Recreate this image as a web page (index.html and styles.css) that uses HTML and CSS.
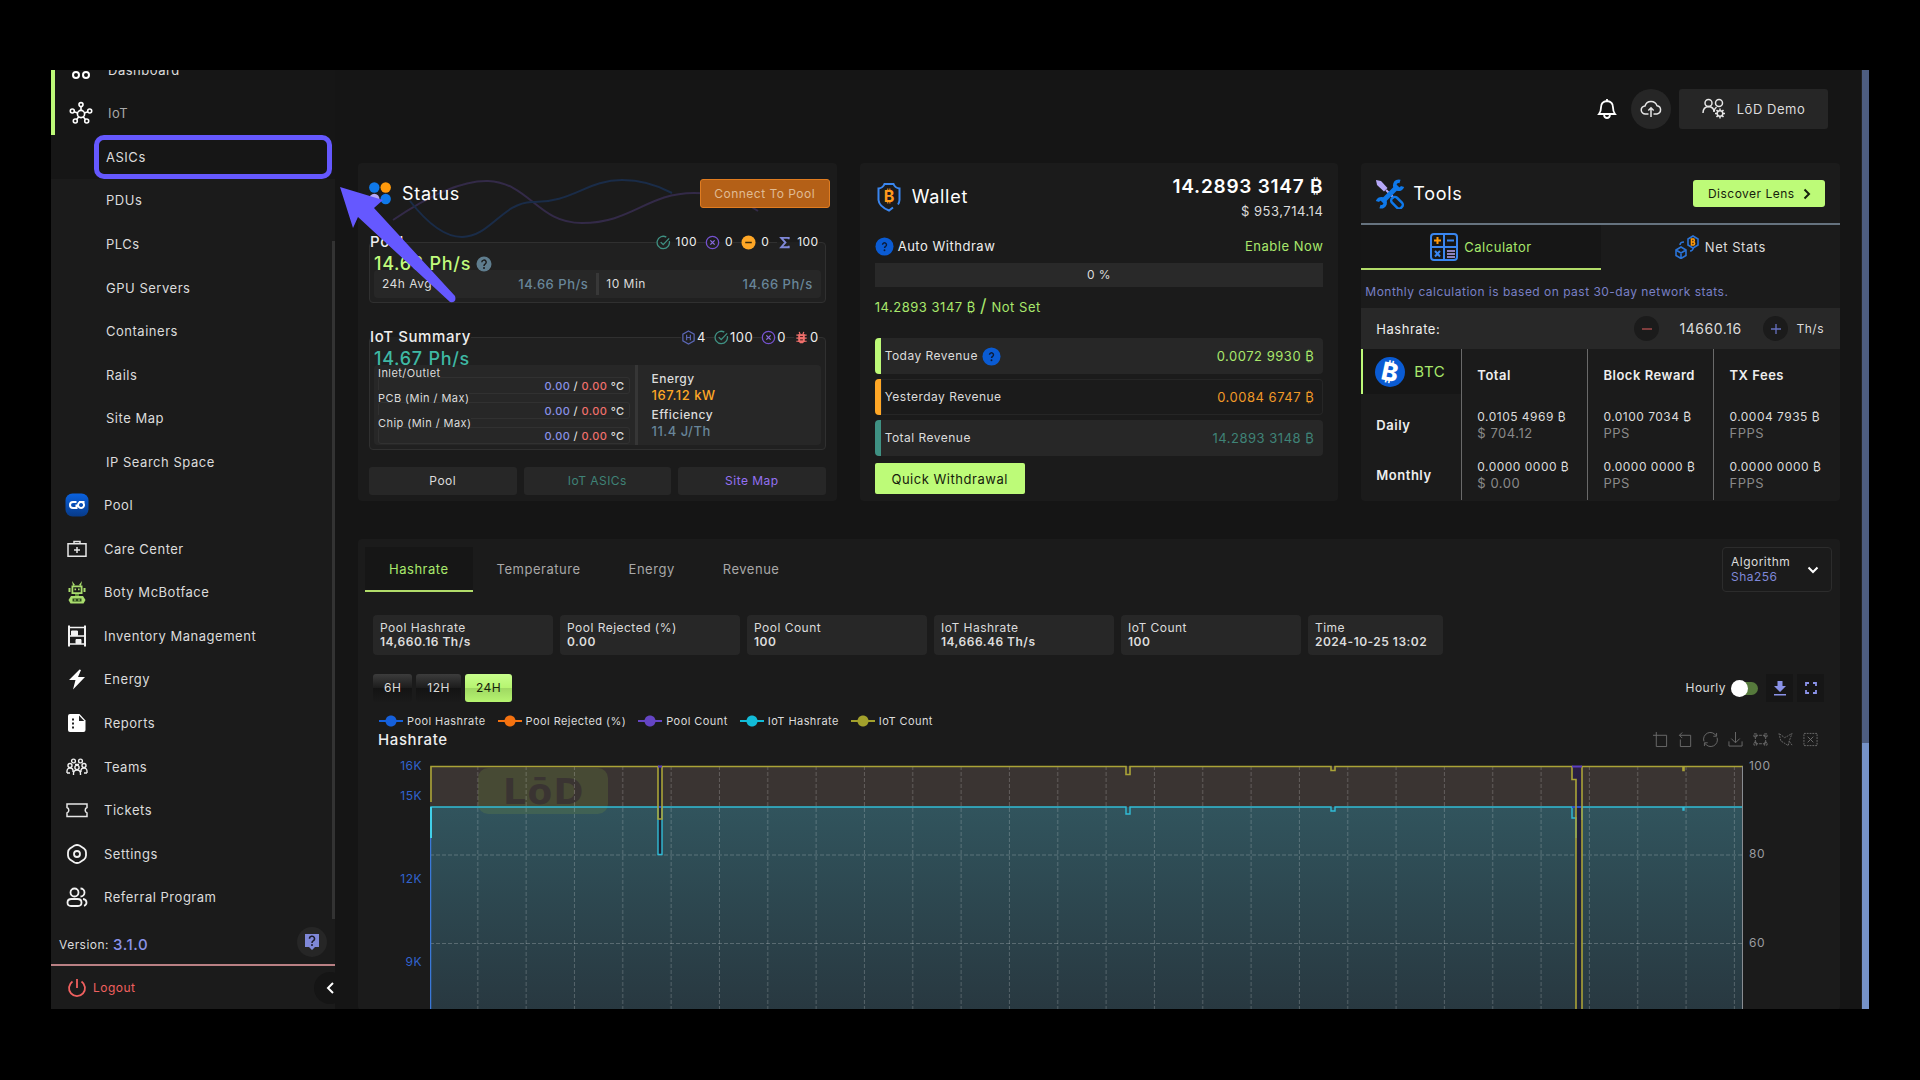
FILE: index.html
```html
<!DOCTYPE html>
<html lang="en">
<head>
    <meta charset="UTF-8">
    <meta name="viewport" content="width=device-width, initial-scale=1.0">
    <title>LōD Dashboard</title>
    <link rel="stylesheet" href="styles.css">
</head>
<body>

    <!-- shared icons -->
    <svg class="sprite" aria-hidden="true">
        <symbol id="i-check" viewBox="0 0 16 16">
            <path d="M14.2 6.5A6.6 6.6 0 1 1 11 2.2M5 7.6l2.7 2.7L14 3.6" fill="none" stroke="#3f9183" stroke-width="1.4"/>
        </symbol>
        <symbol id="i-cross" viewBox="0 0 16 16">
            <circle cx="8" cy="8" r="6.6" fill="none" stroke="#7552cf" stroke-width="1.4"/>
            <path d="M5.7 5.7l4.6 4.6M10.3 5.7l-4.6 4.6" stroke="#8a6be0" stroke-width="1.4"/>
        </symbol>
        <symbol id="i-help" viewBox="0 0 20 20">
            <circle cx="10" cy="10" r="9.5" fill="#0a5bd3"/>
            <path d="M7.9 8.2a2.1 2.1 0 1 1 3.2 1.8q-1.1.6-1.1 1.7" fill="none" stroke="#0b1c3c" stroke-width="1.5"/>
            <circle cx="10" cy="14" r="1" fill="#0b1c3c"/>
        </symbol>
    </svg>

    <div class="app">

        <aside class="sidebar">
            <nav class="nav">
                <ul class="nav-list">
                    <li class="main-item active">
                        <a href="#">
                            <svg width="24" height="24" viewBox="0 0 24 24" fill="none" stroke="#fff" stroke-width="2"><circle cx="7" cy="7" r="3"/><circle cx="17" cy="7" r="3"/><circle cx="7" cy="17" r="3"/><circle cx="17" cy="17" r="3"/></svg>
                            Dashboard
                        </a>
                    </li>
                    <li class="main-item active">
                        <a href="#">
                            <svg width="24" height="24" viewBox="0 0 24 24" fill="none" stroke="#fff" stroke-width="1.6"><circle cx="12" cy="13" r="3.6"/><circle cx="12" cy="3.6" r="2"/><circle cx="3.3" cy="10" r="2"/><circle cx="20.7" cy="10" r="2"/><circle cx="6.3" cy="20" r="2"/><circle cx="17.7" cy="20" r="2"/><path d="M12 5.6v3.8M5.2 10.8l3.4 1.1M18.8 10.8l-3.4 1.1M7.6 18.4l2.2-2.6M16.4 18.4l-2.2-2.6"/></svg>
                            <span class="dim">IoT</span>
                        </a>
                    </li>
                    <li class="sub-item current">
                        <a href="#">ASICs</a>
                        <svg class="pointer" width="120" height="120" viewBox="0 0 120 120" fill="#6558ff"><path d="M0 2L43 15L34 23L115 111Q117 118 110 117L18 32L13 43Z"/></svg>
                    </li>
                    <li class="sub-item"><a href="#">PDUs</a></li>
                    <li class="sub-item"><a href="#">PLCs</a></li>
                    <li class="sub-item"><a href="#">GPU Servers</a></li>
                    <li class="sub-item"><a href="#">Containers</a></li>
                    <li class="sub-item"><a href="#">Rails</a></li>
                    <li class="sub-item"><a href="#">Site Map</a></li>
                    <li class="sub-item"><a href="#">IP Search Space</a></li>
                    <li class="main-item">
                        <a href="#">
                            <svg width="24" height="24" viewBox="0 0 24 24"><defs><linearGradient id="poolbg" x2="0" y2="1"><stop stop-color="#0a62e0"/><stop offset="1" stop-color="#073a88"/></linearGradient></defs><rect x=".5" y=".5" width="23" height="23" rx="7" fill="url(#poolbg)"/><path d="M11.500 9H8a3 3 0 0 0 0 6h3.500V11.500M14 9h5.500M16 9a3 3 0 1 0 .1 0" fill="none" stroke="#fff" stroke-width="2"/></svg>
                            Pool
                        </a>
                    </li>
                    <li class="main-item">
                        <a href="#">
                            <svg width="24" height="24" viewBox="0 0 24 24" fill="none" stroke="#e6e6e6" stroke-width="1.5"><path d="M3 6.800h18v12.400H3zM9 6.500V4.500h6v2M12 10v6M9 13h6"/></svg>
                            Care Center
                        </a>
                    </li>
                    <li class="main-item">
                        <a href="#">
                            <svg width="24" height="24" viewBox="0 0 24 24" fill="#a9dd6d"><path d="M7 1l3 4-2 1zM17 1l-3 4 2 1z"/><path d="M6.500 5.500h11v8.500h-11zM8.300 7.200v5h7.400v-5z" fill-rule="evenodd"/><path d="M3.500 8h2v4h-2zM18.500 8h2v4h-2zM9.500 8.500h1.600v1.800H9.500zM13 8.500h1.600v1.800H13z"/><path d="M10 14h4v2h-4z" fill="#5d8a36"/><path d="M6 16h12l2.500 4-2 3.500h-13l-2-3.500z"/><path d="M7.500 18.500h9v3h-9z" fill="#2c4a1c"/><path d="M9 19.500h2v1H9zM13 19.500h2v1h-2z"/></svg>
                            Boty McBotface
                        </a>
                    </li>
                    <li class="main-item">
                        <a href="#">
                            <svg width="24" height="24" viewBox="0 0 24 24" fill="none" stroke="#f2f2f2"><path d="M4 1.500v21M20 1.500v21" stroke-width="2"/><path d="M4 3.500h16M4 12h16M4 20h16" stroke-width="1.500"/><path d="M6.500 7h6v4.500h-6zM11 15.500h5v4h-5z" fill="#f2f2f2"/></svg>
                            Inventory Management
                        </a>
                    </li>
                    <li class="main-item">
                        <a href="#">
                            <svg width="24" height="24" viewBox="0 0 24 24" fill="#fff"><path d="M14.500 2.500L4 13h6.500l-2.500 9.500L20 10h-7l3-7z"/></svg>
                            Energy
                        </a>
                    </li>
                    <li class="main-item">
                        <a href="#">
                            <svg width="24" height="24" viewBox="0 0 24 24"><path d="M5 3h9.500l6 6.500V19a2 2 0 0 1-2 2H5a2 2 0 0 1-2-2V5a2 2 0 0 1 2-2z" fill="#fff"/><path d="M14 4.500V10h5.300zM7 7.500h2v2H7zM7 11.500h2v2H7zM7 15.500h2v2H7z" fill="#222"/></svg>
                            Reports
                        </a>
                    </li>
                    <li class="main-item">
                        <a href="#">
                            <svg width="24" height="24" viewBox="0 0 24 24" fill="none" stroke="#f0f0f0" stroke-width="1.400"><circle cx="8.500" cy="6" r="1.900"/><circle cx="15.500" cy="6" r="1.900"/><circle cx="5" cy="10.500" r="2"/><circle cx="19" cy="10.500" r="2"/><circle cx="12" cy="12.500" r="2.100"/><path d="M2 18q-.5-5 3-5t3 4M22 18q.5-5-3-5t-3 4M8.500 20q-.5-5 3.500-5t3.500 5M2 18h3M19 18h3M10 9.500h4"/></svg>
                            Teams
                        </a>
                    </li>
                    <li class="main-item">
                        <a href="#">
                            <svg width="24" height="24" viewBox="0 0 24 24" fill="none" stroke="#e6e6e6" stroke-width="1.500"><path d="M2 6h20v3.500a3 3 0 0 0 0 5.500v3.500H2V15a3 3 0 0 0 0-5.500z"/></svg>
                            Tickets
                        </a>
                    </li>
                    <li class="main-item">
                        <a href="#">
                            <svg width="24" height="24" viewBox="0 0 24 24" fill="none" stroke="#f2f2f2" stroke-width="1.800"><path d="M9.500 3.500q2.500-1 5 0l4.500 3q2 1.500 2 4v3q0 2.500-2 4l-4.500 3q-2.500 1-5 0l-4.500-3q-2-1.500-2-4v-3q0-2.500 2-4z"/><circle cx="12" cy="12" r="3"/></svg>
                            Settings
                        </a>
                    </li>
                    <li class="main-item">
                        <a href="#">
                            <svg width="24" height="24" viewBox="0 0 24 24" fill="none" stroke="#f2f2f2" stroke-width="1.800"><circle cx="9.500" cy="7.500" r="4"/><path d="M2.500 17.500q0-3.500 4-3.500h6q4 0 4 3.500t-3.500 3.500H6q-3.500 0-3.500-3.500zM15.500 3.500a4 4 0 0 1 0 8M18 14q3.500.5 3.500 3.500 0 2.500-2.500 3.300"/></svg>
                            Referral Program
                        </a>
                    </li>
                </ul>
                <div class="nav-thumb"></div>
            </nav>
            <div class="version">
                <span>Version:</span>
                <strong>3.1.0</strong>
                <button class="help-btn" aria-label="Help">
                    <svg width="16" height="18" viewBox="0 0 16 18"><path d="M1 1h14v13h-4l-3 3-3-3H1z" fill="#7f88d8"/><path d="M5.500 5.800a2.500 2.500 0 1 1 3.700 2.100q-1.200.7-1.200 2" fill="none" stroke="#1b1b2c" stroke-width="1.500"/><circle cx="8" cy="12" r="1" fill="#1b1b2c"/></svg>
                </button>
            </div>
            <div class="logout">
                <a href="#">
                    <svg width="20" height="20" viewBox="0 0 20 20" fill="none" stroke="#f0605f" stroke-width="1.800"><path d="M5.500 3.500a8 8 0 1 0 9 0M10 1v9"/></svg>
                    Logout
                </a>
                <button class="collapse" aria-label="Collapse menu">
                    <svg width="10" height="12" viewBox="0 0 10 12" fill="none" stroke="#fff" stroke-width="2"><path d="M8 1L3 6l5 5"/></svg>
                </button>
            </div>
        </aside>

        <main class="main">
            <header class="topbar">
                <button class="bell" aria-label="Notifications">
                    <svg width="20" height="22" viewBox="0 0 20 22" fill="none" stroke="#fff" stroke-width="1.800"><path d="M2 16q2-2.500 2-6.500 0-6 6-6.500 6 .5 6 6.500 0 4 2 6.500zM10 3V1M7 17q.5 3 3 3t3-3"/></svg>
                </button>
                <button class="cloud" aria-label="Upload">
                    <svg width="22" height="18" viewBox="0 0 22 18" fill="none" stroke="#e6e6e6" stroke-width="1.500"><path d="M8.500 14H5.500a4 4 0 0 1-.5-8 6.300 6.300 0 0 1 12-.3 4.200 4.200 0 0 1 0 8.300h-3.500M11 17V8M8.300 10.500L11 7.800l2.700 2.700"/></svg>
                </button>
                <button class="account">
                    <svg width="24" height="22" viewBox="0 0 24 22" fill="none" stroke="#e6e6e6" stroke-width="1.500"><circle cx="6.500" cy="5" r="3.500"/><circle cx="17" cy="5" r="3.500"/><path d="M1 15q0-6 5.500-6.500Q12 9 12 14q0-3 2.500-5"/><circle cx="18" cy="15.500" r="2.800"/><path d="M18 10.500v2M18 18.500v2M13 15.500h2M21 15.500h2M14.500 12l1.400 1.400M20.100 17.600l1.400 1.400M21.500 12l-1.400 1.400M15.900 17.600L14.500 19"/></svg>
                    LōD Demo
                </button>
            </header>

            <section class="cards">

                <article class="card status">
                    <svg class="waves" width="370" height="64" viewBox="0 0 370 64" fill="none" stroke-width="2"><path d="M1 43Q60 3 96 4C138 6 145 46 190 46C240 46 255 16 302 16Q340 16 366 34" stroke="#332a48"/><path d="M18 24Q46 60 70 60C98 60 110 26 140 25C180 26 195 3 230 3Q256 3 280 16" stroke="#1a2c48"/></svg>
                    <div class="card-head">
                        <svg width="22" height="23" viewBox="0 0 22 23"><circle cx="5.300" cy="5.500" r="5.200" fill="#0f79ea"/><circle cx="16.700" cy="5.500" r="5.200" fill="#ff9a0c"/><circle cx="5.300" cy="17" r="5.200" fill="#b6a8f8"/><circle cx="16.700" cy="17" r="5.200" fill="#0f79ea"/></svg>
                        <h2>Status</h2>
                        <button class="connect">Connect To Pool</button>
                    </div>

                    <div class="group">
                        <div class="group-head">
                            <h3>Pool</h3>
                            <ul class="counts wide">
                                <li><svg><use href="#i-check"/></svg>100</li>
                                <li><svg><use href="#i-cross"/></svg>0</li>
                                <li><svg viewBox="0 0 16 16"><circle cx="8" cy="8" r="7.500" fill="#ffa726"/><path d="M4.500 8h7" stroke="#3a2a0a" stroke-width="1.600"/></svg>0</li>
                                <li><svg viewBox="0 0 16 16" fill="none" stroke="#7f88d8" stroke-width="2"><path d="M12.500 4.500V3h-8l4.500 5-4.500 5h8v-1.500"/></svg>100</li>
                            </ul>
                        </div>
                        <div class="rate lime">14.66 Ph/s
                            <svg width="16" height="16" viewBox="0 0 16 16"><circle cx="8" cy="8" r="7.500" fill="#5f7d8e"/><path d="M5.800 6.300a2.200 2.200 0 1 1 3.300 1.900Q8 8.900 8 10" fill="none" stroke="#1b1b1b" stroke-width="1.500"/><circle cx="8" cy="12" r="1" fill="#1b1b1b"/></svg>
                        </div>
                        <div class="panel averages">
                            <div><span>24h Avg</span><b>14.66 Ph/s</b></div>
                            <div><span>10 Min</span><b>14.66 Ph/s</b></div>
                        </div>
                    </div>

                    <div class="group">
                        <div class="group-head">
                            <h3>IoT Summary</h3>
                            <ul class="counts">
                                <li><svg viewBox="0 0 16 16" fill="none" stroke="#5a66b4" stroke-width="1.300"><path d="M8 1l6 3.400v7.200L8 15l-6-3.400V4.400z"/><path d="M6 5v6M10 5v6M6 8h4"/></svg>4</li>
                                <li><svg><use href="#i-check"/></svg>100</li>
                                <li><svg><use href="#i-cross"/></svg>0</li>
                                <li><svg viewBox="0 0 16 16" fill="#f0706c"><path d="M4.500 4.500h7v7.500l-2 2h-3l-2-2z"/><path d="M5.500 2l1 2.500M10.500 2l-1 2.500M2.500 5.500h11M2.500 8.700h11M2.500 12h11" stroke="#f0706c" stroke-width="1.300"/><path d="M6.500 7h3M6.500 10.500h3" stroke="#3a1515"/></svg>0</li>
                            </ul>
                        </div>
                        <div class="rate teal">14.67 Ph/s</div>
                        <div class="panel summary">
                            <dl class="temps">
                                <div><dt>Inlet/Outlet</dt><dd><i class="cold">0.00</i> / <i class="hot">0.00</i> °C</dd></div>
                                <div><dt>PCB (Min / Max)</dt><dd><i class="cold">0.00</i> / <i class="hot">0.00</i> °C</dd></div>
                                <div><dt>Chip (Min / Max)</dt><dd><i class="cold">0.00</i> / <i class="hot">0.00</i> °C</dd></div>
                            </dl>
                            <dl class="power">
                                <dt>Energy</dt><dd class="orange">167.12 kW</dd>
                                <dt>Efficiency</dt><dd class="slate">11.4 J/Th</dd>
                            </dl>
                        </div>
                    </div>

                    <div class="links">
                        <button>Pool</button>
                        <button class="green">IoT ASICs</button>
                        <button class="violet">Site Map</button>
                    </div>
                </article>

                <article class="card wallet">
                    <div class="wallet-head">
                        <svg width="28" height="30" viewBox="0 0 28 30"><path d="M18 25.500L14 28.500Q4 24.500 3.500 18V6.500Q8 6 9.500 2h9q1.500 4 6 4.500V18q-.3 3-1.500 4.500" fill="none" stroke="#3a86f0" stroke-width="2"/><text x="14" y="20" text-anchor="middle" class="coin">₿</text></svg>
                        <h2>Wallet</h2>
                        <div class="balance">
                            <strong>14.2893 3147 ₿</strong>
                            <span>$ 953,714.14</span>
                        </div>
                    </div>
                    <div class="auto">
                        <svg class="help"><use href="#i-help"/></svg>
                        <span>Auto Withdraw</span>
                        <a href="#">Enable Now</a>
                    </div>
                    <div class="bar">0 %</div>
                    <div class="target">14.2893 3147 ₿ <big>/</big> Not Set</div>
                    <ul class="revenue">
                        <li class="today">Today Revenue <svg class="help"><use href="#i-help"/></svg><b>0.0072 9930 ₿</b></li>
                        <li class="yesterday">Yesterday Revenue <b>0.0084 6747 ₿</b></li>
                        <li class="total">Total Revenue <b>14.2893 3148 ₿</b></li>
                    </ul>
                    <button class="withdraw">Quick Withdrawal</button>
                </article>

                <article class="card tools">
                    <div class="tools-head">
                        <svg width="30" height="30" viewBox="0 0 30 30"><path d="M1 1l5 1 6.500 7-3.500 3.500L2 6z" fill="#b6a8f8"/><path d="M11 11l7 7" stroke="#b6a8f8" stroke-width="2"/><rect x="16" y="20" width="13" height="7" rx="3" transform="rotate(45 22 23)" fill="none" stroke="#0f79ea" stroke-width="2.500"/><path d="M7 23L23 7" stroke="#0f79ea" stroke-width="5"/><path d="M25 2.500a4 4 0 1 0 2.500 5M5 27.500a4 4 0 1 0-2.500-5" fill="none" stroke="#0f79ea" stroke-width="3.500"/></svg>
                        <h2>Tools</h2>
                        <button class="discover">Discover Lens
                            <svg width="8" height="12" viewBox="0 0 8 12" fill="none" stroke="#16210c" stroke-width="2"><path d="M1.500 1.500L6 6l-4.500 4.500"/></svg>
                        </button>
                    </div>
                    <div class="tools-tabs">
                        <button class="selected">
                            <svg width="28" height="28" viewBox="0 0 28 28" fill="none" stroke-width="2"><rect x="1" y="1" width="26" height="26" rx="3" stroke="#3a86f0"/><path d="M14 1v26M1 14h26M17 7.500h7" stroke="#3a86f0"/><path d="M4 7.500h7M7.500 4v7" stroke="#ff9a0c"/><path d="M5 18l5 5.500M10 18l-5 5.500" stroke="#3a86f0"/><path d="M17 18h8M17 21h8M17 24h8" stroke="#b6a8f8" stroke-width="1.300"/></svg>
                            Calculator
                        </button>
                        <button>
                            <svg width="24" height="24" viewBox="0 0 24 24" fill="none" stroke="#2b74d8" stroke-width="1.600"><path d="M1 15l5-3 5 3v5.500l-5 3-5-3zM1 15l5 3 5-3M6 18v5M5 10q0-3 4-3M15 16q3 0 3.500-4"/><path d="M18 1l5 3v6l-5 3-5-3V4z"/><path d="M16.500 4h2.300q1 1.400 0 3 1.500 1.500 0 3h-2.300zM16.500 7h2" stroke="#ff9a0c"/></svg>
                            Net Stats
                        </button>
                    </div>
                    <p class="note">Monthly calculation is based on past 30-day network stats.</p>
                    <div class="hashrate">
                        <label for="rate">Hashrate:</label>
                        <button class="minus" aria-label="Decrease"><svg width="12" height="12" viewBox="0 0 12 12" stroke="#a04a4a" stroke-width="1.500"><path d="M1 6h10"/></svg></button>
                        <input id="rate" type="text" value="14660.16">
                        <button class="plus" aria-label="Increase"><svg width="12" height="12" viewBox="0 0 12 12" stroke="#6670c0" stroke-width="1.300"><path d="M1 6h10M6 1v10"/></svg></button>
                        <span>Th/s</span>
                    </div>
                    <table class="calc">
                        <thead>
                            <tr>
                                <th class="coin-cell">
                                    <div class="btc">
                                        <svg width="30" height="30" viewBox="0 0 30 30"><circle cx="15" cy="15" r="15" fill="#0a5bd3"/><text x="15" y="24" text-anchor="middle" class="btc-sign" transform="rotate(12 15 15)">₿</text></svg>
                                        BTC
                                    </div>
                                </th>
                                <th>Total</th>
                                <th>Block Reward</th>
                                <th>TX Fees</th>
                            </tr>
                        </thead>
                        <tbody>
                            <tr>
                                <th>Daily</th>
                                <td>0.0105 4969 ₿<small>$ 704.12</small></td>
                                <td>0.0100 7034 ₿<small>PPS</small></td>
                                <td>0.0004 7935 ₿<small>FPPS</small></td>
                            </tr>
                            <tr>
                                <th>Monthly</th>
                                <td>0.0000 0000 ₿<small>$ 0.00</small></td>
                                <td>0.0000 0000 ₿<small>PPS</small></td>
                                <td>0.0000 0000 ₿<small>FPPS</small></td>
                            </tr>
                        </tbody>
                    </table>
                </article>

            </section>

            <section class="card chart-card">
                <div class="chart-top">
                    <div class="tabs">
                        <button class="selected">Hashrate</button>
                        <button>Temperature</button>
                        <button>Energy</button>
                        <button>Revenue</button>
                    </div>
                    <div class="algorithm">
                        <label for="algo">Algorithm</label>
                        <select id="algo"><option>Sha256</option></select>
                        <svg width="12" height="8" viewBox="0 0 12 8" fill="none" stroke="#fff" stroke-width="2"><path d="M1.500 1.500L6 6l4.500-4.500"/></svg>
                    </div>
                </div>

                <div class="stats">
                    <div>Pool Hashrate<b>14,660.16 Th/s</b></div>
                    <div>Pool Rejected (%)<b>0.00</b></div>
                    <div>Pool Count<b>100</b></div>
                    <div>IoT Hashrate<b>14,666.46 Th/s</b></div>
                    <div>IoT Count<b>100</b></div>
                    <div class="time">Time<b>2024-10-25 13:02</b></div>
                </div>

                <div class="controls">
                    <button class="range">6H</button>
                    <button class="range">12H</button>
                    <button class="range on">24H</button>
                    <label class="hourly">Hourly <input type="checkbox" role="switch"></label>
                    <button class="square" aria-label="Download">
                        <svg width="12" height="15" viewBox="0 0 12 15" fill="#8a92e8"><path d="M3.500 0h5v5H12l-6 6-6-6h3.500zM0 13h12v1.500H0z"/></svg>
                    </button>
                    <button class="square" aria-label="Full screen">
                        <svg width="12" height="12" viewBox="0 0 12 12" fill="none" stroke="#8a92e8" stroke-width="1.800"><path d="M1 4V1h3M8 1h3v3M11 8v3H8M4 11H1V8"/></svg>
                    </button>
                </div>

                <ul class="legend">
                    <li class="c-blue">Pool Hashrate</li>
                    <li class="c-orange">Pool Rejected (%)</li>
                    <li class="c-purple">Pool Count</li>
                    <li class="c-cyan">IoT Hashrate</li>
                    <li class="c-olive">IoT Count</li>
                </ul>

                <div class="chart-title">
                    <h3>Hashrate</h3>
                    <div class="toolbox">
                        <svg viewBox="0 0 16 16"><path d="M0 3.500h14.500v12h-11V0"/></svg>
                        <svg viewBox="0 0 16 16"><path d="M4.500 .5L1.500 3.500l3 3M1.500 3.500h12v12h-11V8"/></svg>
                        <svg viewBox="0 0 16 16"><path d="M1 10A7.200 7.200 0 0 1 14 4M15 6a7.200 7.200 0 0 1-13 6M14.500 1v3.500H11M1.500 15v-3.500H5"/></svg>
                        <svg viewBox="0 0 16 16"><path d="M8 0v11M3.500 7L8 11.500 12.500 7M1 10v5h14v-5"/></svg>
                        <svg viewBox="0 0 16 16" stroke-dasharray="3 1"><path d="M2.500 3.500h11v9h-11zM1 2h3v3H1zM12 2h3v3h-3zM1 11h3v3H1zM12 11h3v3h-3z"/></svg>
                        <svg viewBox="0 0 16 16" stroke-dasharray="2 1"><path d="M1 1.500l2 8 8 5 1-5 3-8-5 3-3 1.500zM12 10l3 4"/></svg>
                        <svg viewBox="0 0 16 16"><path d="M1 1.500h14v13H1z" stroke-dasharray="2 1"/><path d="M5 5l6 6M11 5l-6 6"/></svg>
                    </div>
                </div>

                <div class="chart">
                    <svg class="axis" width="72" height="260">
                        <g fill="#3263cf" text-anchor="end">
                            <text x="64" y="20">16K</text>
                            <text x="64" y="50">15K</text>
                            <text x="64" y="133">12K</text>
                            <text x="64" y="216">9K</text>
                        </g>
                    </svg>
                    <svg class="plot" viewBox="0 0 1313 260" preserveAspectRatio="none">
                        <defs>
                            <linearGradient id="sea" x2="0" y2="1"><stop stop-color="#31545d"/><stop offset="1" stop-color="#283840"/></linearGradient>
                            <linearGradient id="gap" x2="0" y2="1"><stop stop-color="#2b1f44"/><stop offset=".2" stop-color="#211d3c"/><stop offset="1" stop-color="#1c2236"/></linearGradient>
                            <pattern id="cols" width="48.330" height="260" patternUnits="userSpaceOnUse"><path d="M47.800 16v244" stroke="#fff" stroke-opacity=".2" stroke-dasharray="4 2"/></pattern>
                        </defs>
                        <path d="M0 16h1313v41H0z" fill="#3a3432"/>
                        <path d="M0 57h1313v203H0z" fill="url(#sea)"/>
                        <rect x="48" y="18" width="130" height="46" rx="10" fill="#6f8c3a" fill-opacity=".25"/>
                        <text x="114" y="54" text-anchor="middle" class="watermark">LōD</text>
                        <path d="M0 16h1313v244H0z" fill="url(#cols)"/>
                        <path d="M0 105h1313M0 193.500h1313" stroke="#fff" stroke-opacity=".22" stroke-dasharray="4 2"/>
                        <path d="M228 16h4v89h-4z" fill="#1d2030"/>
                        <path d="M1142 16h10v244h-6V29h-4z" fill="url(#gap)"/>
                        <!-- IoT Hashrate -->
                        <path d="M1 88V57h227v47.500h4V57h464v7h4v-7h201v4h4v-4h237v11h4v20M1152 70V57h101v3h1v-3h59" fill="none" stroke="#31bcd6" stroke-width="1.400"/>
                        <path d="M228 57h4M1142 57h10" stroke="#2c55c8" stroke-width="2"/>
                        <!-- IoT Count -->
                        <path d="M1 52V16.500h227V69h4V16.500h464v8h4v-8h201v4h4v-4h237v13h4V260M1152 260V16.500h101v4h1v-4h59" fill="none" stroke="#aaa337" stroke-width="1.600"/>
                        <path d="M228 16.500h4M1142 16.500h10" stroke="#5b3fc0" stroke-width="2"/>
                        <path d="M.5 57v203" stroke="#3a78d8" stroke-width="1.500"/>
                        <path d="M1 57v31" stroke="#41d0ea" stroke-width="2"/>
                        <path d="M1312.500 16v244" stroke="#8a8d92"/>
                    </svg>
                    <svg class="axis" width="97" height="260">
                        <g fill="#9a9ba0">
                            <text x="6" y="20">100</text>
                            <text x="6" y="108">80</text>
                            <text x="6" y="197">60</text>
                        </g>
                    </svg>
                </div>
            </section>
        </main>

        <div class="page-scroll"></div>
    </div>

</body>
</html>
```

FILE: styles.css
```css
* {
    box-sizing: border-box;
    letter-spacing: .04em;
}

body {
    margin: 0;
    background: #000;
    color: #dcdcdc;
    font-family: Inter, "Liberation Sans", sans-serif;
    font-size: 13px;
    line-height: 16px;
}

h2, h3, ul, dl, dd, p {
    margin: 0;
    padding: 0;
}

ul {
    list-style: none;
}

a {
    color: inherit;
    text-decoration: none;
}

button, input, select {
    font: inherit;
    color: inherit;
    border: 0;
    margin: 0;
    padding: 0;
    background: none;
}

svg {
    display: block;
    flex: none;
}

.sprite {
    position: absolute;
    width: 0;
    height: 0;
}

.app {
    display: flex;
    height: calc(100vh - 141px);
    margin: 70px 51px 71px;
    background: #151515;
    overflow: hidden;
}

/* sidebar */

.sidebar {
    flex: none;
    width: 284px;
    display: flex;
    flex-direction: column;
    background: #1b1b1b;
    z-index: 1;
}

.nav {
    flex: 1;
    display: flex;
    position: relative;
}

.nav-list {
    flex: 1;
    display: flex;
    flex-direction: column;
    margin-top: -22px;
}

.nav-list li {
    flex: 1;
    display: flex;
    align-items: center;
}

.nav-list a {
    display: flex;
    align-items: center;
    gap: 15px;
}

.main-item {
    padding-left: 14px;
}

.main-item.active {
    border-left: 4px solid #bdf978;
    background: #161616;
}

.main-item .dim {
    color: #a8a8a8;
}

.sub-item {
    padding-left: 55px;
}

.sub-item.current {
    position: relative;
    background: #161616;
}

.sub-item.current::after {
    content: "";
    position: absolute;
    inset: 0 3px 0 43px;
    border: 5px solid #6558ff;
    border-radius: 10px;
}

.pointer {
    position: absolute;
    left: 289px;
    top: 50px;
}

.nav-thumb {
    position: absolute;
    right: 0;
    top: 171px;
    bottom: 0;
    width: 3px;
    background: #333;
}

.version {
    display: flex;
    align-items: center;
    gap: 4px;
    height: 45px;
    padding: 6px 8px 0;
    font-size: 12px;
}

.version strong {
    font-size: 15px;
    font-weight: 500;
    color: #8a92e8;
}

.help-btn {
    width: 30px;
    height: 30px;
    margin: -6px 0 0 auto;
    padding: 6px 7px;
    border-radius: 50%;
    background: #262626;
}

.logout {
    display: flex;
    align-items: center;
    justify-content: space-between;
    height: 45px;
    padding-left: 16px;
    border-top: 2px solid #b98084;
    color: #f0605f;
    font-size: 12px;
    overflow: hidden;
}

.logout a {
    display: flex;
    align-items: center;
    gap: 6px;
}

.collapse {
    width: 32px;
    height: 32px;
    margin-right: -11px;
    padding-left: 11px;
    border-radius: 50%;
    background: #151515;
}

/* main */

.main {
    flex: 1;
    min-width: 0;
    padding: 0 21px 0 23px;
}

.page-scroll {
    flex: none;
    width: 8px;
    background: linear-gradient(#4d5d80 673px, #7592c8 673px);
    border-left: 1px solid #222;
}

.topbar {
    display: flex;
    justify-content: flex-end;
    align-items: flex-start;
    padding: 19px 12px 34px;
}

.topbar button {
    height: 40px;
    display: flex;
    align-items: center;
    justify-content: center;
}

.bell {
    width: 40px;
    margin-right: 4px;
}

.cloud {
    width: 40px;
    border-radius: 50%;
    background: #262626;
}

.account {
    gap: 11px;
    width: 149px;
    margin-left: 8px;
    background: #262626;
    border-radius: 3px;
}

.cards {
    display: grid;
    grid-template-columns: repeat(3, 1fr);
    gap: 23px;
    margin-bottom: 38px;
}

.card {
    position: relative;
    background: #1b1b1b;
    border-radius: 4px;
}

h2 {
    font-size: 18px;
    line-height: 24px;
    font-weight: 400;
    color: #fff;
}

h3 {
    font-size: 15px;
    font-weight: 500;
    color: #eee;
}

/* status */

.status {
    padding: 16px 11px 5px;
}

.waves {
    position: absolute;
    left: 34px;
    top: 14px;
}

.card-head {
    position: relative;
    display: flex;
    align-items: center;
    height: 29px;
    gap: 11px;
    margin: 0 -4px 1px 0;
}

.connect {
    margin-left: auto;
    width: 130px;
    height: 29px;
    font-size: 12px;
    color: #e0bb94;
    background: #b46017;
    border: 1px solid #e07c20;
    border-radius: 3px;
}

.group {
    margin-top: 34px;
    padding: 0 4px 4px;
    border: 1px solid #303030;
    border-radius: 4px;
    background: #202020;
}

.group-head {
    display: flex;
    justify-content: space-between;
    align-items: center;
    height: 18px;
    margin: -10px 2px 0 -4px;
    line-height: 18px;
}

.group-head h3 {
    background: linear-gradient(#1b1b1b 50%, #202020 50%);
}

.counts {
    display: flex;
    gap: 8px;
    font-size: 13px;
    color: #eee;
}

.counts li {
    display: flex;
    align-items: center;
    gap: 1px;
    background: linear-gradient(#1b1b1b 50%, #202020 50%);
}

.counts.wide {
    font-size: 12px;
}

.counts.wide li {
    gap: 5px;
}

.counts svg {
    width: 15px;
    height: 15px;
}

.rate {
    display: flex;
    align-items: center;
    gap: 5px;
    font-size: 18px;
    line-height: 26px;
    font-weight: 500;
}

.lime {
    color: #c0fb7c;
}

.teal {
    color: #3fb8a4;
}

.panel {
    display: flex;
    margin-top: -7px;
    background: #272727;
    border-radius: 4px;
}

.averages {
    height: 28px;
    font-size: 12px;
}

.averages div {
    flex: 1;
    display: flex;
    align-items: center;
    justify-content: space-between;
    padding: 0 8px;
}

.averages div + div {
    background: linear-gradient(#383838, #383838) 0 50% / 3px 22px no-repeat;
    padding-left: 10px;
}

.averages b {
    font-size: 13px;
    font-weight: 500;
    color: #68869a;
}

.temps {
    flex: none;
    width: 59%;
    padding: 0 5px 1px 4px;
    border-right: 3px solid #363636;
}

.temps div + div {
    margin-top: -4px;
}

.temps dt {
    width: max-content;
    margin-bottom: -4px;
    font-size: 11px;
    background: #272727;
}

.temps dd {
    height: 17px;
    padding-right: 4px;
    border: 1px solid #313131;
    border-radius: 3px;
    font-size: 11px;
    font-weight: 500;
    line-height: 16px;
    text-align: right;
}

.temps i {
    font-style: normal;
}

.cold {
    color: #8a92e8;
}

.hot {
    color: #f0706c;
}

.power {
    padding: 5px 14px 0;
    font-weight: 500;
}

.power dt {
    font-size: 12px;
    line-height: 18px;
}

.power dd {
    line-height: 14px;
    margin-bottom: 4px;
}

.orange {
    color: #ffa726;
}

.slate {
    color: #68869a;
}

.links {
    display: grid;
    grid-template-columns: repeat(3, 1fr);
    gap: 7px;
    margin-top: 17px;
}

.links button {
    height: 28px;
    background: #272727;
    border-radius: 3px;
    font-size: 12px;
}

.links .green {
    color: #3f8377;
}

.links .violet {
    color: #9471f2;
}

/* wallet */

.wallet {
    padding: 10px 15px 7px;
}

.wallet-head {
    display: flex;
    align-items: center;
    gap: 9px;
}

.coin {
    font-size: 16px;
    font-weight: 700;
    letter-spacing: 0;
    fill: #ff9a1c;
}

.balance {
    margin-left: auto;
    text-align: right;
}

.balance strong {
    display: block;
    font-size: 19px;
    line-height: 28px;
    font-weight: 600;
    color: #fff;
}

.balance span {
    line-height: 20px;
}

.auto {
    display: flex;
    align-items: center;
    gap: 4px;
    height: 20px;
    margin-top: 15px;
    color: #eee;
}

.auto a {
    margin-left: auto;
    color: #a9e86c;
}

.help {
    width: 19px;
    height: 19px;
}

.bar {
    height: 24px;
    margin-top: 7px;
    background: #292929;
    font-size: 12px;
    line-height: 24px;
    text-align: center;
}

.target {
    height: 20px;
    margin-top: 9px;
    line-height: 20px;
    color: #a9e86c;
}

.target big {
    font-size: 18px;
}

.revenue {
    display: grid;
    gap: 5px;
    margin: 22px 0 7px;
}

.revenue li {
    display: flex;
    align-items: center;
    gap: 4px;
    height: 36px;
    padding: 0 9px 0 4px;
    border-left: 6px solid;
    border-radius: 4px;
    background: #272727;
    font-size: 12px;
}

.revenue b {
    margin-left: auto;
    font-size: 13px;
    font-weight: 400;
}

.revenue .today {
    border-color: #bdf978;
}

.revenue .yesterday {
    background: #1b1b1b;
    border-color: #ffa726;
    box-shadow: inset 0 0 0 1px #262626;
}

.revenue .total {
    border-color: #3f9183;
}

.today b {
    color: #a9e86c;
}

.yesterday b {
    color: #f09a28;
}

.total b {
    color: #3f8377;
}

.withdraw {
    display: block;
    width: 150px;
    height: 31px;
    background: #bdfb78;
    border-radius: 2px;
    color: #16210c;
}

/* tools */

.tools-head {
    display: flex;
    align-items: center;
    gap: 8px;
    height: 62px;
    padding: 1px 15px 0 14px;
    border-bottom: 2px solid #66737f;
}

.discover {
    display: flex;
    align-items: center;
    justify-content: space-between;
    width: 132px;
    height: 27px;
    margin-left: auto;
    padding: 0 14px 0 15px;
    background: #bdfb78;
    border-radius: 3px;
    color: #16210c;
    font-size: 12px;
}

.tools-tabs {
    display: grid;
    grid-template-columns: 1fr 1fr;
}

.tools-tabs button {
    display: flex;
    align-items: center;
    justify-content: center;
    gap: 6px;
    height: 45px;
    border-bottom: 2px solid transparent;
}

.tools-tabs .selected {
    background: #161616;
    border-color: #b2dc6a;
    color: #a9e86c;
}

.note {
    padding: 14px 4px 8px;
    font-size: 12px;
    color: #7980c6;
}

.hashrate {
    display: flex;
    align-items: center;
    height: 41px;
    padding: 0 16px 0 15px;
    background: #282828;
}

.hashrate label {
    margin-right: auto;
    color: #eee;
}

.hashrate button {
    width: 25px;
    height: 25px;
    border-radius: 50%;
    background: #1b1b1b;
    padding-left: 7px;
}

.hashrate input {
    width: 104px;
    font-size: 14px;
    text-align: center;
}

.hashrate span {
    margin-left: 9px;
    font-size: 12px;
}

.calc {
    width: 100%;
    border-collapse: collapse;
    table-layout: fixed;
}

.calc th, .calc td {
    height: 50px;
    padding: 0 0 0 15px;
    text-align: left;
    font-weight: 400;
    white-space: nowrap;
}

.calc th {
    font-weight: 600;
    color: #eee;
}

.calc td {
    font-size: 12px;
}

.calc thead th {
    height: 51px;
}

.calc th + th, .calc td {
    border-left: 1px solid #6a6a6a;
}

.calc .coin-cell {
    width: 21%;
    padding: 0;
    vertical-align: top;
}

.calc small {
    display: block;
    font-size: 13px;
    color: #8a8a8a;
}

.btc {
    display: flex;
    align-items: center;
    gap: 9px;
    height: 45px;
    padding-left: 12px;
    border-left: 2px solid #bdf978;
    background: #161616;
    color: #a9e86c;
    font-size: 15px;
    font-weight: 400;
}

.btc-sign {
    font-size: 25px;
    font-weight: 800;
    letter-spacing: 0;
    fill: #fff;
}

/* chart */

.chart-card {
    padding-top: 8px;
}

.chart-top {
    display: flex;
    justify-content: space-between;
    padding: 0 8px 0 7px;
}

.tabs {
    display: flex;
}

.tabs button {
    height: 45px;
    padding: 1px 24px 0;
    border-bottom: 2px solid transparent;
    color: #a8a8a8;
}

.tabs .selected {
    background: #161616;
    border-color: #b2dc6a;
    color: #a9e86c;
}

.algorithm {
    position: relative;
    width: 110px;
    height: 45px;
    padding: 6px 8px;
    border: 1px solid #2c2c2c;
    border-radius: 4px;
    font-size: 12px;
    line-height: 15px;
}

.algorithm label {
    display: block;
}

.algorithm select {
    appearance: none;
    width: 100%;
    line-height: 15px;
    color: #7f88d8;
    display: block;
}

.algorithm svg {
    position: absolute;
    right: 12px;
    top: 18px;
    pointer-events: none;
}

.stats {
    display: flex;
    gap: 7px;
    margin-top: 23px;
    padding-left: 15px;
    font-size: 12px;
    line-height: 14px;
}

.stats div {
    width: 180px;
    height: 40px;
    padding: 6px 7px;
    background: #272727;
    border-radius: 4px;
}

.stats .time {
    width: auto;
    padding-right: 16px;
}

.stats b {
    display: block;
    font-weight: 600;
}

.controls {
    display: flex;
    align-items: center;
    gap: 4px;
    margin-top: 19px;
    padding: 0 16px 0 15px;
    font-size: 12px;
}

.range {
    height: 28px;
    padding: 0 11px;
    border-radius: 3px;
    background: linear-gradient(#3c3c3c, #1c1c1c 50%, #131313 50%, #1a1a1a);
}

.range.on {
    background: linear-gradient(#c8ff8c, #b6f470 50%, #9fd862 50%, #b6f470);
    color: #16210c;
}

.hourly {
    display: flex;
    align-items: center;
    gap: 6px;
    margin: 0 4px 0 auto;
}

.hourly input {
    appearance: none;
    position: relative;
    width: 26px;
    height: 13px;
    border-radius: 7px;
    background: #567a3c;
}

.hourly input::before {
    content: "";
    position: absolute;
    left: -1px;
    top: -2px;
    width: 17px;
    height: 17px;
    border-radius: 50%;
    background: #fff;
}

.square {
    display: flex;
    align-items: center;
    justify-content: center;
    width: 27px;
    height: 28px;
    background: #161616;
}

.legend {
    display: flex;
    gap: 12px;
    margin-top: 11px;
    padding-left: 21px;
    font-size: 11px;
}

.legend li {
    display: flex;
    align-items: center;
    gap: 4px;
}

.legend li::before {
    content: "";
    width: 24px;
    height: 12px;
    background: radial-gradient(circle, var(--c) 5px, transparent 6px), linear-gradient(var(--c), var(--c)) 0 50% / 24px 2px no-repeat;
}

.c-blue { --c: #1560dc; }
.c-orange { --c: #f57210; }
.c-purple { --c: #6545c4; }
.c-cyan { --c: #12bcd8; }
.c-olive { --c: #a3a12c; }

.chart-title {
    display: flex;
    justify-content: space-between;
    align-items: center;
    height: 21px;
    padding: 0 22px 0 20px;
}

.toolbox {
    display: flex;
    gap: 10px;
}

.toolbox svg {
    width: 15px;
    height: 15px;
    fill: none;
    stroke: #6c6c6c;
    overflow: visible;
}

.chart {
    display: flex;
    font-size: 12px;
}

.plot {
    flex: 1;
    min-width: 0;
    height: 260px;
}

.watermark {
    font-family: "DejaVu Sans", sans-serif;
    font-size: 36px;
    font-weight: 700;
    fill: #3a3432;
}
```
